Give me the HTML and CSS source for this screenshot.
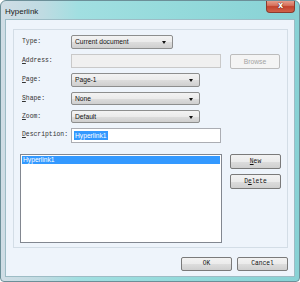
FILE: index.html
```html
<!DOCTYPE html>
<html lang="en">
<head>
  <meta charset="UTF-8">
  <title>Hyperlink</title>
  <link rel="stylesheet" href="styles.css">
</head>
<body>
  <div class="window">
    <div class="titlebar">
      <span class="title">Hyperlink</span>
      <div class="close">x</div>
    </div>
    <div class="client">
      <div class="panel">
        <div class="form">
          <div class="label">Type:</div>
          <div class="field">
            <div class="combo w-type">Current document<span class="arrow"></span></div>
          </div>

          <div class="label"><u>A</u>ddress:</div>
          <div class="field">
            <div class="textbox disabled w-wide"></div>
            <div class="btn disabled">Browse</div>
          </div>

          <div class="label"><u>P</u>age:</div>
          <div class="field">
            <div class="combo w-mid">Page-1<span class="arrow"></span></div>
          </div>

          <div class="label"><u>S</u>hape:</div>
          <div class="field">
            <div class="combo w-mid">None<span class="arrow"></span></div>
          </div>

          <div class="label"><u>Z</u>oom:</div>
          <div class="field">
            <div class="combo w-mid">Default<span class="arrow"></span></div>
          </div>

          <div class="label"><u>D</u>escription:</div>
          <div class="field">
            <div class="textbox w-wide"><span class="sel">Hyperlink1</span></div>
          </div>
        </div>

        <div class="links">
          <div class="listbox">
            <div class="item selected">Hyperlink1</div>
          </div>
          <div class="side">
            <div class="btn mono"><u>N</u>ew</div>
            <div class="btn mono">D<u>e</u>lete</div>
          </div>
        </div>
      </div>

      <div class="footer">
        <div class="btn mono">OK</div>
        <div class="btn mono">Cancel</div>
      </div>
    </div>
  </div>
</body>
</html>
```

FILE: styles.css
```css
body {
  margin: 0;
  background: #ffffff;
}

.window {
  width: 300px;
  height: 282px;
  box-sizing: border-box;
  border: 1px solid #6c8f98;
  border-radius: 6px 6px 4px 4px;
  background: linear-gradient(90deg, #d0dde5 0, #bfdbe2 14%, #a1dfe1 26%, #94dadb 60%, #88d2d5 100%);
  display: flex;
  flex-direction: column;
  overflow: hidden;
}

.titlebar {
  height: 18px;
  display: flex;
  align-items: flex-start;
  padding-left: 4px;
}

.title {
  font-family: "Liberation Sans", Arial, sans-serif;
  font-size: 8px;
  color: #1b1b1b;
  margin-top: 6px;
}

.close {
  margin-left: auto;
  margin-right: 4px;
  margin-top: -1px;
  width: 29px;
  height: 13px;
  box-sizing: border-box;
  border: 1px solid #8b3b2e;
  border-top: none;
  border-radius: 0 0 4px 4px;
  background: linear-gradient(#e9a796 0, #d7725d 45%, #c2432d 55%, #d0624a 100%);
  color: #ffffff;
  font-family: "DejaVu Sans", sans-serif;
  font-weight: bold;
  font-size: 8px;
  line-height: 11px;
  text-align: center;
  text-shadow: 0 0 1px #4a1a12, 0 0 1px #4a1a12;
}

.client {
  margin: 0 4px 4px 4px;
  flex: 1;
  background: #eef4fb;
  border: 1px solid #9dbcc5;
  display: flex;
  flex-direction: column;
}

.panel {
  margin: 9px 6px 0 7px;
  height: 219px;
  box-sizing: border-box;
  border: 1px solid #d3dde6;
  padding: 5px 0 0 8px;
}

.form {
  display: grid;
  grid-template-columns: 49px auto;
  grid-template-rows: 14px 14px 14px 13px 13px 15px;
  row-gap: 5px;
}

.label {
  font-family: "Liberation Mono", "DejaVu Sans Mono", monospace;
  font-size: 6.4px;
  color: #333333;
  line-height: 14px;
  white-space: nowrap;
}

.field {
  display: flex;
  align-items: stretch;
}

.combo {
  position: relative;
  box-sizing: border-box;
  border: 1px solid #8d8e8e;
  border-radius: 2px;
  background: linear-gradient(#f3f3f3 0, #ebebeb 50%, #dddddd 51%, #cfcfcf 100%);
  font-family: "Liberation Sans", Arial, sans-serif;
  font-size: 6.7px;
  color: #111111;
  padding-left: 3px;
  line-height: 12px;
}

.arrow {
  position: absolute;
  right: 6px;
  top: 5px;
  border-left: 2.5px solid transparent;
  border-right: 2.5px solid transparent;
  border-top: 3px solid #111111;
}

.w-type { width: 102px; }
.w-mid { width: 129px; }
.w-wide { width: 150px; }

.textbox {
  box-sizing: border-box;
  border: 1px solid #abadb3;
  background: #ffffff;
  font-family: "Liberation Sans", Arial, sans-serif;
  font-size: 6.7px;
  padding: 2px 0 0 2px;
}

.textbox.disabled {
  background: #f0f0f0;
  border-color: #c9c9c9;
}

.sel {
  background: #3399ff;
  color: #ffffff;
  line-height: 9px;
  display: inline-block;
  padding: 0 1px;
}

.btn {
  width: 51px;
  height: 15px;
  box-sizing: border-box;
  border: 1px solid #7a7a7a;
  border-radius: 2px;
  background: linear-gradient(#f2f2f2 0, #ebebeb 50%, #dddddd 51%, #cfcfcf 100%);
  font-family: "Liberation Sans", Arial, sans-serif;
  font-size: 6.7px;
  color: #111111;
  text-align: center;
  line-height: 13px;
}

.btn.mono {
  font-family: "Liberation Mono", "DejaVu Sans Mono", monospace;
  font-size: 6.3px;
}

.btn.disabled {
  margin-left: 9px;
  width: 50px;
  border-color: #bcbcbc;
  background: #f4f4f4;
  color: #a3a3a3;
}

.links {
  display: flex;
  margin-top: 11px;
  margin-left: -2px;
}

.listbox {
  width: 202px;
  height: 89px;
  box-sizing: border-box;
  border: 1px solid #828790;
  background: #ffffff;
  padding: 1px;
}

.item {
  font-family: "Liberation Sans", Arial, sans-serif;
  font-size: 6.7px;
  line-height: 8px;
  padding-left: 1px;
}

.item.selected {
  background: #3399ff;
  color: #ffffff;
}

.side {
  margin-left: 8px;
  display: flex;
  flex-direction: column;
  gap: 5px;
}

.footer {
  display: flex;
  justify-content: flex-end;
  gap: 5px;
  margin: 9px 6px 0 0;
}

.footer .btn {
  height: 14px;
  line-height: 12px;
}
```
